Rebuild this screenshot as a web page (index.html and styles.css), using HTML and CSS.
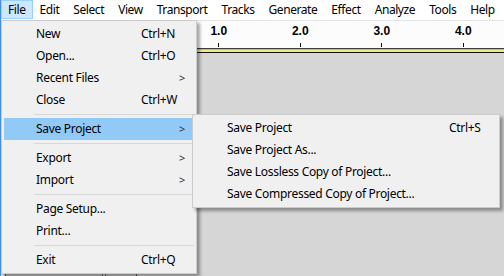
FILE: index.html
```html
<!DOCTYPE html>
<html>
<head>
    <title>Audacity - File menu</title>
    <link rel="stylesheet" href="styles.css">
</head>
<body>
    <div class="window">
        <div class="menubar">
            <span class="menubar-item active">File</span>
            <span class="menubar-item">Edit</span>
            <span class="menubar-item">Select</span>
            <span class="menubar-item">View</span>
            <span class="menubar-item">Transport</span>
            <span class="menubar-item">Tracks</span>
            <span class="menubar-item">Generate</span>
            <span class="menubar-item">Effect</span>
            <span class="menubar-item">Analyze</span>
            <span class="menubar-item">Tools</span>
            <span class="menubar-item">Help</span>
        </div>

        <div class="workspace">
            <div class="ruler">
                <div class="tick"><span>1.0</span><i></i></div>
                <div class="tick"><span>2.0</span><i></i></div>
                <div class="tick"><span>3.0</span><i></i></div>
                <div class="tick"><span>4.0</span><i></i></div>
            </div>
            <div class="ruler-edge"></div>
            <div class="tracks">
                <div class="track-head"></div>
                <div class="track-head small"></div>
            </div>
        </div>

        <!-- File menu -->
        <div class="menu file-menu">
            <div class="item"><span class="label">New</span><span class="key">Ctrl+N</span></div>
            <div class="item"><span class="label">Open...</span><span class="key">Ctrl+O</span></div>
            <div class="item"><span class="label">Recent Files</span><span class="arrow">&gt;</span></div>
            <div class="item"><span class="label">Close</span><span class="key">Ctrl+W</span></div>
            <div class="sep"></div>
            <div class="item selected"><span class="label">Save Project</span><span class="arrow">&gt;</span></div>
            <div class="sep"></div>
            <div class="item"><span class="label">Export</span><span class="arrow">&gt;</span></div>
            <div class="item"><span class="label">Import</span><span class="arrow">&gt;</span></div>
            <div class="sep"></div>
            <div class="item"><span class="label">Page Setup...</span></div>
            <div class="item"><span class="label">Print...</span></div>
            <div class="sep"></div>
            <div class="item"><span class="label">Exit</span><span class="key">Ctrl+Q</span></div>
        </div>

        <!-- Save Project submenu -->
        <div class="menu sub-menu">
            <div class="item"><span class="label">Save Project</span><span class="key">Ctrl+S</span></div>
            <div class="item"><span class="label">Save Project As...</span></div>
            <div class="item"><span class="label">Save Lossless Copy of Project...</span></div>
            <div class="item"><span class="label">Save Compressed Copy of Project...</span></div>
        </div>
    </div>
</body>
</html>
```

FILE: styles.css
```css
body {
    margin: 0;
    background-color: #d6d6d6;
    font-family: "Noto Sans", "Open Sans", sans-serif;
    font-size: 12px;
    letter-spacing: -0.3px;
    color: #000;
}

.window {
    position: relative;
    width: 504px;
    height: 276px;
    overflow: hidden;
    border-left: 1px solid #4a90d9;
    box-sizing: border-box;
}

/* top menu bar */
.menubar {
    display: flex;
    height: 20px;
    background-color: #fff;
    letter-spacing: -0.42px;
}

.menubar-item {
    display: flex;
    align-items: center;
    height: 19px;
    padding: 0 6px 1px 6px;
    border: 1px solid transparent;
    box-sizing: border-box;
}

.menubar-item.active {
    background-color: #cce8ff;
    border-color: #99d1ff;
}

/* time ruler and track area behind the menu */
.workspace {
    display: flex;
    flex-direction: column;
    height: 256px;
}

.ruler {
    display: flex;
    height: 27px;
    padding-left: 177px;
    background-color: #fcfcfc;
    border-top: 1px solid #e3e3e3;
}

.tick {
    width: 86px;
    display: flex;
    flex-direction: column;
    align-items: center;
    justify-content: flex-end;
}

.tick span {
    font-family: "Liberation Sans", Arial, sans-serif;
    font-weight: bold;
    font-size: 12px;
    letter-spacing: 0;
    line-height: 14px;
    margin-bottom: 5px;
}

.tick i {
    display: block;
    width: 1px;
    height: 4px;
    background-color: #000;
    margin-bottom: 1px;
}

.ruler-edge {
    height: 3px;
    border-top: 1px solid #3c3c3c;
    border-bottom: 1px solid #111;
    background: linear-gradient(#b8b8b8 0, #b8b8b8 1px, #eeea8a 1px);
}

.tracks {
    flex: 1;
    display: flex;
    align-items: flex-end;
    padding-left: 4px;
    gap: 2px;
}

.track-head {
    width: 96px;
    height: 3px;
    border: 1px solid #555;
    border-bottom: none;
    background-color: #c8c8c8;
}

.track-head.small {
    width: 30px;
}

/* popup menus */
.menu {
    position: absolute;
    background-color: #f0f0f0;
    border: 1px solid #cccccc;
    padding: 2px;
    box-shadow: 3px 3px 3px rgba(0, 0, 0, 0.35);
}

.file-menu {
    left: 0;
    top: 20px;
    width: 190px;
}

.sub-menu {
    left: 191px;
    top: 114px;
    width: 302px;
}

.item {
    display: flex;
    align-items: center;
    height: 22px;
    padding-left: 32px;
    padding-bottom: 1px;
    box-sizing: border-box;
}

.item .label {
    width: 105px;
    white-space: nowrap;
}

.sub-menu .item .label {
    width: 222px;
}

.item .arrow {
    margin-left: auto;
    margin-right: 9px;
    font-size: 11px;
    color: #333;
}

.item.selected {
    background-color: #91c9f7;
}

.sep {
    height: 7px;
    display: flex;
    align-items: center;
    padding-left: 30px;
}

.sep::after {
    content: "";
    flex: 1;
    height: 1px;
    background-color: #d7d7d7;
}
```
